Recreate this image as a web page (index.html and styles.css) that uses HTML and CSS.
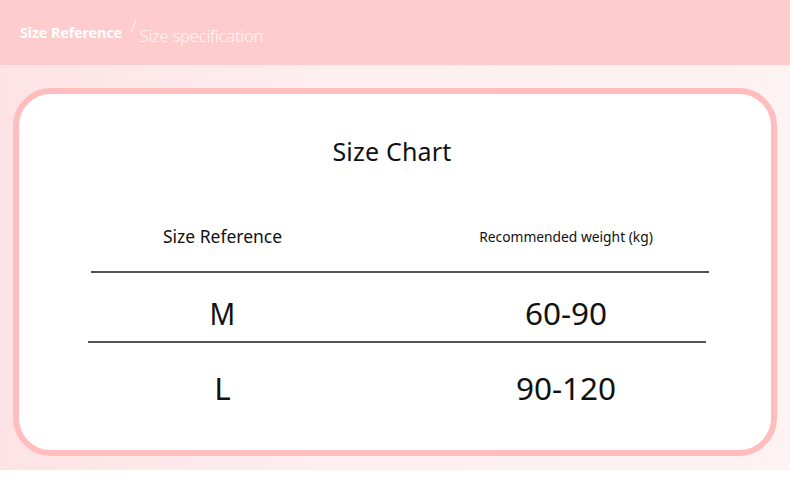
FILE: index.html
```html
<!DOCTYPE html>
<html>
<head>
<meta charset="utf-8">
<link rel="stylesheet" href="styles.css">
</head>
<body>
<header class="topbar">
  <span class="tab-active">Size Reference</span>
  <span class="slash">/</span>
  <span class="tab">Size specification</span>
</header>
<main class="stage">
  <section class="card">
    <h1 class="title">Size Chart</h1>
    <div class="table">
      <div class="row head">
        <div class="cell c1">Size Reference</div>
        <div class="cell c2 small">Recommended weight (kg)</div>
      </div>
      <div class="rule r1"></div>
      <div class="row big b1">
        <div class="cell c1"><span class="narrow">M</span></div>
        <div class="cell c2">60-90</div>
      </div>
      <div class="rule r2"></div>
      <div class="row big b2">
        <div class="cell c1">L</div>
        <div class="cell c2">90-120</div>
      </div>
    </div>
  </section>
</main>
</body>
</html>
```
FILE: styles.css
```css
html, body { margin: 0; padding: 0; background: #fff; }
body { width: 790px; height: 496px; overflow: hidden; font-family: "Noto Sans", "Open Sans", sans-serif; color: #111; }
.topbar {
  height: 65px; background: #fecccc; display: flex; align-items: center;
  padding-left: 20px; box-sizing: border-box; color: #fff;
}
.tab-active { font-size: 14.5px; font-weight: 700; letter-spacing: -0.2px; margin-top: -2px; }
.slash { font-size: 16px; margin: -14px 3px 0 9px; opacity: .9; font-weight: 300; }
.tab { font-size: 16.8px; font-weight: 300; opacity: .85; letter-spacing: -0.3px; margin-top: 6px; }
.stage {
  height: 405px; box-sizing: border-box; padding: 23px 13px 14px 13px;
  background: linear-gradient(90deg, #fde3e5 0%, #fdeef0 40%, #fdf3f2 100%);
}
.card {
  height: 368px; box-sizing: border-box; border: 6px solid #ffbdbe; border-radius: 38px;
  background: #fff; display: flex; flex-direction: column; align-items: center;
}
.title { font-size: 25px; font-weight: 400; margin: 40px 0 0 -6px; line-height: 34px; letter-spacing: 0.2px; }
.table { width: 621px; margin: 46px 0 0 6px; }
.row { display: flex; }
.cell { text-align: center; }
.c1 { width: 270px; }
.c2 { width: 285px; padding-left: 66px; }
.head { height: 30px; align-items: center; font-size: 17.5px; margin-top: 7px; }
.small { font-size: 13.8px; }
.rule { height: 2px; background: #555; }
.r1 { margin: 20px 0 0 3px; }
.r2 { margin: 0 3px 0 0; }
.big { height: 68px; box-sizing: border-box; font-size: 31.5px; line-height: 40px; }
.narrow { display: inline-block; transform: scaleX(0.9); }
.b1 { padding-top: 20px; }
.b2 { padding-top: 25px; }
```
